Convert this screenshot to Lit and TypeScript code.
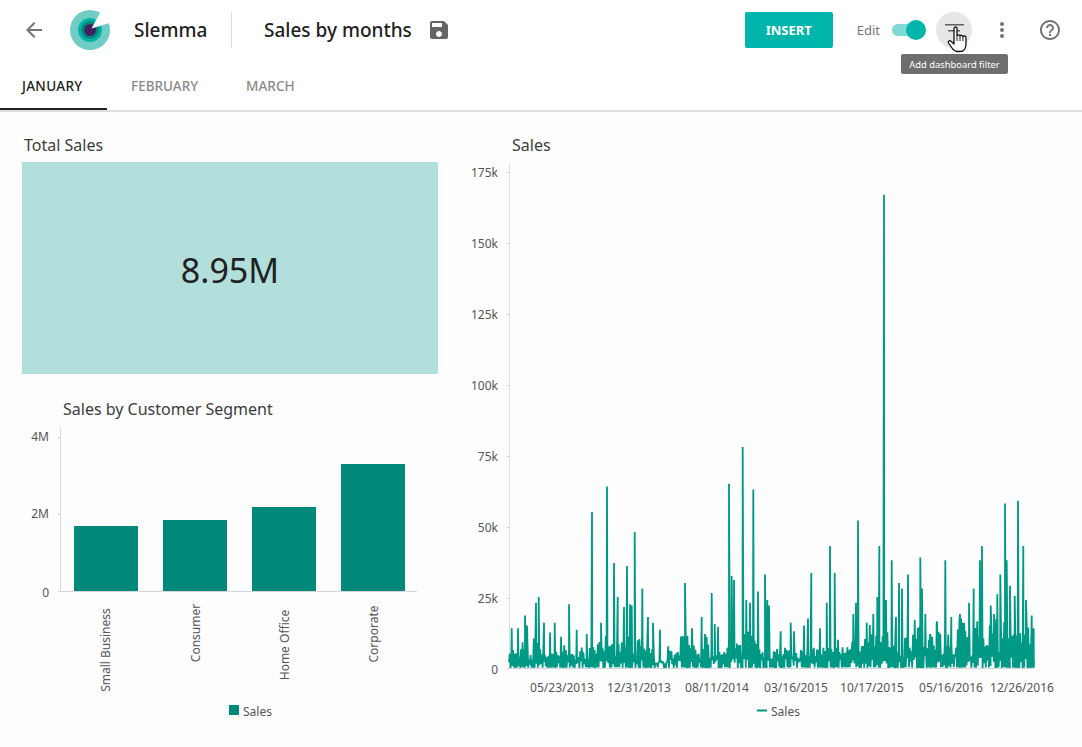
import { LitElement, html, css, svg } from "lit";
import { customElement } from "lit/decorators.js";

const Y0 = 668;
const K = 496 / 175;
const PEAKS: [number, number][] = [
  [511.7,14],[518,14],[525,18.5],[527,15],[536,23],[538.7,25],[544,16],[550,12.5],[554.7,16],[561,11],[569,22.5],[576.7,13.5],[586.7,12],
  [592,55],[601,16],[607,64],[614,37],[617.7,25],[624,21.5],[627,36],[630,22.5],[631.7,22],[634.7,48],[642.3,28],[648,18],[653,16],[660,13.5],
  [685,30],[692,14],[701.7,18],[711.7,26.5],[714.7,15.5],[718,14.5],[729,65],[731.7,32.5],[734,31],[742.7,78],[746.3,24],[750,23],[753.3,63],[758,27],[765,33],[767.3,24],[769,22],
  [780.7,13],[790.7,16],[794,13],[804,15],[808,17.5],[811.3,33.5],[820,14],[826.7,23],[830,43],[834.7,33.5],[838,10],[853.3,19],[856,23],[858,52],[866.7,16],[873.3,19],[877.3,25],[879.3,43],[884,167],[886,24],[891.7,38],[896,18],[899,30],[902,28],[908,33],[914.7,17],[920.3,39],[922,28],[925.3,19],[930,12],[936.7,16],[945.3,38],[951.3,18],[960,19],[965.3,13],[969,23],[973.7,28],[977.3,16.5],[980,38],[982,43],[990.7,22],[994,19],[997.3,26],[1000.3,33],[1005,58],[1006.7,38],[1010,29],[1014.7,25.5],[1018,59],[1023.3,43],[1026,24],[1031.7,18.5],[1033.7,14],
];

function buildLine(): string {
  let seed = 20160417;
  const rnd = () => {
    seed = (seed * 1664525 + 1013904223) >>> 0;
    return ((seed >>> 8) % 65536) / 65536;
  };
  const pts: [number, number][] = [];
  let burst = 4;
  for (let x = 509; x <= 1034; x += 0.8) {
    const t = (x - 509) / 525;
    if (pts.length % 5 === 0) burst = 3.5 + rnd() * (7 + t * 7) + t * 3;
    let top = burst;
    if (x > 655 && x < 668) top = Math.min(top, 2.5);
    if (x > 770 && x < 850) top = Math.min(top, 7.5);
    const low = pts.length % 2 === 0;
    const deep = rnd() < 0.65;
    pts.push([x, low ? (deep ? rnd() * 0.3 : 0.6 + rnd() * (1.5 + t * 3)) : top * (0.55 + rnd() * 0.45)]);
  }
  for (const p of PEAKS) pts.push(p);
  pts.sort((a, b) => a[0] - b[0]);
  return pts.map((p, i) => `${i ? "L" : "M"}${p[0].toFixed(1)} ${(Y0 - p[1] * K).toFixed(1)}`).join("");
}
const LINE = buildLine() + `L1034 ${(Y0 - 3 * K).toFixed(1)}`;

const BARS = [
  { x: 74, top: 526, label: "Small Business", cx: 105, cy: 650 },
  { x: 163, top: 520, label: "Consumer", cx: 195, cy: 633 },
  { x: 252, top: 507, label: "Home Office", cx: 284, cy: 645 },
  { x: 341, top: 464, label: "Corporate", cx: 373, cy: 634 },
];
const Y_RIGHT: [string, number, number][] = [["175k",172,172],["150k",243,243],["125k",314,314],["100k",385,385],["75k",456,456],["50k",527,527],["25k",598,598],["0",669,668]];
const X_RIGHT: [string, number][] = [["05/23/2013",562],["12/31/2013",639],["08/11/2014",717],["03/16/2015",796],["10/17/2015",872],["05/16/2016",951],["12/26/2016",1022]];
const Y_LEFT: [string, number, number][] = [["4M",436,437],["2M",513,514],["0",592,591]];

@customElement("app-root")
export class AppRoot extends LitElement {
  static styles = css`
    :host { display: block; width: 1082px; height: 747px; overflow: hidden; background: #fdfdfd; font-family: "Noto Sans", "Open Sans", sans-serif; color: #212121; }
    .head { position: relative; display: flex; align-items: center; height: 60px; background: #fff; }
    .back { margin-left: 22px; width: 24px; height: 24px; fill: #757575; }
    .logo { margin-left: 22px; width: 44px; height: 44px; }
    .brand { margin-left: 22px; font-size: 19px; font-weight: 500; width: 97px; }
    .divider { width: 1px; height: 36px; background: #dcdcdc; }
    .name { margin-left: 32px; font-size: 19px; font-weight: 500; }
    .save { margin-left: 15px; width: 24px; height: 24px; fill: #666; }
    .insert { margin-left: auto; width: 88px; height: 36px; display: flex; align-items: center; justify-content: center; background: #00b5ab; color: #fff; font-size: 13px; font-weight: 700; border-radius: 2px; }
    .edit { margin-left: 24px; font-size: 13px; color: #757575; }
    .toggle { position: relative; margin-left: 12px; width: 34px; height: 20px; }
    .track { position: absolute; left: 0; top: 4px; width: 30px; height: 12px; border-radius: 6px; background: #7fd9d4; }
    .knob { position: absolute; right: 0; top: 0; width: 20px; height: 20px; border-radius: 50%; background: #00b5ab; }
    .round { margin-left: 10px; width: 36px; height: 36px; border-radius: 50%; background: #e6e6e6; }
    .round svg { display: block; width: 36px; height: 36px; }
    .more { margin-left: 18px; width: 24px; height: 24px; fill: #757575; }
    .help { margin-left: 24px; margin-right: 20px; width: 24px; height: 24px; fill: #757575; }
    .tip { position: absolute; left: 901px; top: 54px; width: 107px; height: 20px; display: flex; align-items: center; justify-content: center; background: #6e6e6e; color: #fff; font-size: 9.4px; border-radius: 2px; white-space: nowrap; }
    .hand { position: absolute; left: 946px; top: 26px; width: 24px; height: 27px; }
    .tabs { display: flex; height: 52px; box-sizing: border-box; border-bottom: 2px solid #dedede; background: #fff; }
    .tab { padding: 2px 24px 0; height: 50px; box-sizing: border-box; display: flex; align-items: center; font-size: 13.5px; font-weight: 500; color: #8a8a8a; }
    .tab.on { width: 107px; padding-left: 22px; padding-right: 0; padding-top: 4px; letter-spacing: 0.3px; color: #212121; border-bottom: 2px solid #212121; }
    .main { display: grid; grid-template-columns: 460px 622px; }
    .left { display: flex; flex-direction: column; padding-top: 23px; }
    .right { display: flex; flex-direction: column; padding-top: 23px; }
    .title { font-size: 16px; line-height: 20px; color: #3c3c3c; }
    .t1 { margin-left: 24px; }
    .t2 { margin-left: 63px; margin-top: 25px; }
    .t3 { margin-left: 52px; }
    .kpi { margin: 7px 0 0 22px; width: 416px; height: 212px; display: flex; align-items: center; justify-content: center; background: #b2dfdb; font-size: 34px; color: #212121; padding-top: 4px; box-sizing: border-box; }
    svg.chart { display: block; }
    .chart text { font-family: "Noto Sans", "Open Sans", sans-serif; font-size: 12px; fill: #555; }
  `;

  private leftChart() {
    return svg`
      <line x1="60.5" y1="427" x2="60.5" y2="592" stroke="#ddd"/>
      <line x1="58" y1="591.5" x2="417" y2="591.5" stroke="#d6d6d6"/>
      ${Y_LEFT.map(([t, y, tick]) => svg`
        <line x1="58" y1="${tick + 0.5}" x2="60" y2="${tick + 0.5}" stroke="#ccc"/>
        <text x="49" y="${y + 5}" text-anchor="end">${t}</text>`)}
      ${BARS.map((b) => svg`
        <rect x="${b.x}" y="${b.top}" width="64" height="${591 - b.top}" fill="#00897b"/>
        <text text-anchor="middle" transform="translate(${b.cx + 5} ${b.cy}) rotate(-90)">${b.label}</text>`)}
      <rect x="229" y="705" width="10" height="10" fill="#00897b"/>
      <text x="243" y="716">Sales</text>
    `;
  }

  private rightChart() {
    return svg`
      <line x1="509.5" y1="163" x2="509.5" y2="668" stroke="#ddd"/>
      <line x1="507" y1="668.5" x2="1034" y2="668.5" stroke="#d6d6d6"/>
      ${Y_RIGHT.map(([t, y, tick]) => svg`
        <line x1="507" y1="${tick + 0.5}" x2="509" y2="${tick + 0.5}" stroke="#ccc"/>
        <text x="498" y="${y + 5}" text-anchor="end">${t}</text>`)}
      ${X_RIGHT.map(([t, x]) => svg`<text x="${x}" y="692" text-anchor="middle">${t}</text>`)}
      <path d="${LINE}" fill="none" stroke="#009985" stroke-width="1.8" stroke-linejoin="bevel"/>
      <line x1="757" y1="710.5" x2="767" y2="710.5" stroke="#009985" stroke-width="2"/>
      <text x="771" y="716">Sales</text>
    `;
  }

  render() {
    return html`
      <div class="head">
        <svg class="back" viewBox="0 0 24 24"><path d="M20 11H7.83l5.59-5.59L12 4l-8 8 8 8 1.41-1.41L7.83 13H20v-2z"/></svg>
        <svg class="logo" viewBox="68 8 44 44">
          <circle cx="90" cy="30" r="20" fill="#6fcdc6"/>
          <circle cx="90" cy="30" r="12" fill="#00b3a8"/>
          <circle cx="90" cy="30" r="9" fill="#00897b"/>
          <circle cx="90" cy="30" r="6" fill="#3d2264"/>
          <polygon points="91.5,28.5 101,11 111,22.5" fill="#fff"/>
        </svg>
        <div class="brand">Slemma</div>
        <div class="divider"></div>
        <div class="name">Sales by months</div>
        <svg class="save" viewBox="0 0 24 24"><path d="M17 3H5c-1.11 0-2 .9-2 2v14c0 1.1.89 2 2 2h14c1.1 0 2-.9 2-2V7l-4-4zm-5 16c-1.66 0-3-1.34-3-3s1.34-3 3-3 3 1.34 3 3-1.34 3-3 3zm3-10H5V5h10v4z"/></svg>
        <div class="insert">INSERT</div>
        <div class="edit">Edit</div>
        <div class="toggle"><div class="track"></div><div class="knob"></div></div>
        <div class="round">
          <svg viewBox="0 0 36 36"><path d="M9 12h19v1.600H9zM12 18h12v1.600H12z" fill="#616161"/></svg>
        </div>
        <svg class="more" viewBox="0 0 24 24"><circle cx="12" cy="6" r="2"/><circle cx="12" cy="12" r="2"/><circle cx="12" cy="18" r="2"/></svg>
        <svg class="help" viewBox="0 0 24 24"><path d="M11 18h2v-2h-2v2zm1-16C6.48 2 2 6.48 2 12s4.48 10 10 10 10-4.48 10-10S17.52 2 12 2zm0 18c-4.41 0-8-3.59-8-8s3.59-8 8-8 8 3.59 8 8-3.59 8-8 8zm0-14c-2.21 0-4 1.79-4 4h2c0-1.1.9-2 2-2s2 .9 2 2c0 2-3 1.75-3 5h2c0-2.25 3-2.5 3-5 0-2.21-1.79-4-4-4z"/></svg>
        <div class="tip">Add dashboard filter</div>
        <svg class="hand" viewBox="0 0 24 27"><path d="M8 2.500c0-2 3-2 3 0V10c.5-1.500 3-1.500 3 .2.5-1.400 3-1.200 3 .5.500-1.200 3-1 3 1V18c0 4-2 7.500-6 7.500h-3c-2.500 0-3.500-1.200-5-3.500L2.500 17c-1-1.700 1-3 2.500-1.700L8 18z" fill="#fff" stroke="#111" stroke-width="1.300" stroke-linejoin="round"/><path d="M11 10.500V15M14 10.500V15M17 11V15" stroke="#111" stroke-width="1"/></svg>
      </div>
      <div class="tabs">
        <div class="tab on">JANUARY</div>
        <div class="tab">FEBRUARY</div>
        <div class="tab">MARCH</div>
      </div>
      <div class="main">
        <div class="left">
          <div class="title t1">Total Sales</div>
          <div class="kpi">8.95M</div>
          <div class="title t2">Sales by Customer Segment</div>
          <svg class="chart" width="460" height="323" viewBox="0 419 460 323">${this.leftChart()}</svg>
        </div>
        <div class="right">
          <div class="title t3">Sales</div>
          <svg class="chart" width="622" height="587" viewBox="460 155 622 587">${this.rightChart()}</svg>
        </div>
      </div>
    `;
  }
}
